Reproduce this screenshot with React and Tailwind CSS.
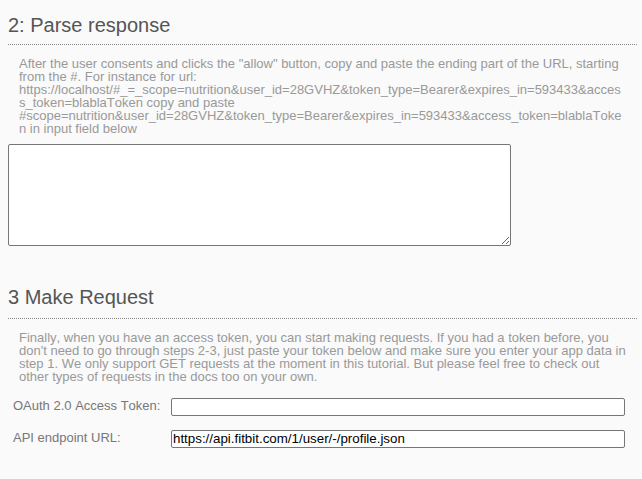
export default function App() {
  return (
    <div className="min-h-[479px] bg-[#fafafa] pl-2 pr-[5px] pt-[14px] font-['Liberation_Sans',Arial,sans-serif] [font-kerning:none]">
      <h2 className="border-b border-dotted border-[#888] pb-[7px] text-[20px] leading-[23px] text-[#555]">
        2: Parse response
      </h2>
      <p className="mt-[12px] w-[619px] pl-[11px] text-[13px] leading-[13.1px] text-[#999] break-words">
        After the user consents and clicks the "allow" button, copy and paste the ending part of the URL, starting from the #. For instance for url: https://localhost/#_=_scope=nutrition&user_id=28GVHZ&token_type=Bearer&expires_in=593433&access_token=blablaToken copy and paste #scope=nutrition&user_id=28GVHZ&token_type=Bearer&expires_in=593433&access_token=blablaToken in input field below
      </p>
      <textarea className="mt-[8px] block h-[102px] w-[503px] rounded-[2px] border border-[#767676] bg-white" />

      <h2 className="mt-[40px] border-b border-dotted border-[#888] pb-[9px] text-[20px] leading-[23px] text-[#555]">
        3 Make Request
      </h2>
      <p className="mt-[12px] w-[619px] pl-[11px] text-[13px] leading-[13.3px] text-[#999] break-words">
        Finally, when you have an access token, you can start making requests. If you had a token before, you don't need to go through steps 2-3, just paste your token below and make sure you enter your app data in step 1. We only support GET requests at the moment in this tutorial. But please feel free to check out other types of requests in the docs too on your own.
      </p>

      <div className="mt-[14px] flex flex-col gap-[14px]">
        <div className="flex items-start">
          <label className="w-[163px] pl-[5px] text-[13px] leading-[15px] text-[#777]">OAuth 2.0 Access Token:</label>
          <input className="h-[18px] w-[454px] rounded-[2px] border border-[#767676] bg-white px-[2px] text-[13.33px] text-black" />
        </div>
        <div className="flex items-start">
          <label className="w-[163px] pl-[5px] text-[13px] leading-[15px] text-[#777]">API endpoint URL:</label>
          <input
            defaultValue="https://api.fitbit.com/1/user/-/profile.json"
            className="h-[18px] w-[454px] rounded-[2px] border border-[#767676] bg-white px-[1px] text-[13.33px] text-black"
          />
        </div>
      </div>
    </div>
  )
}
